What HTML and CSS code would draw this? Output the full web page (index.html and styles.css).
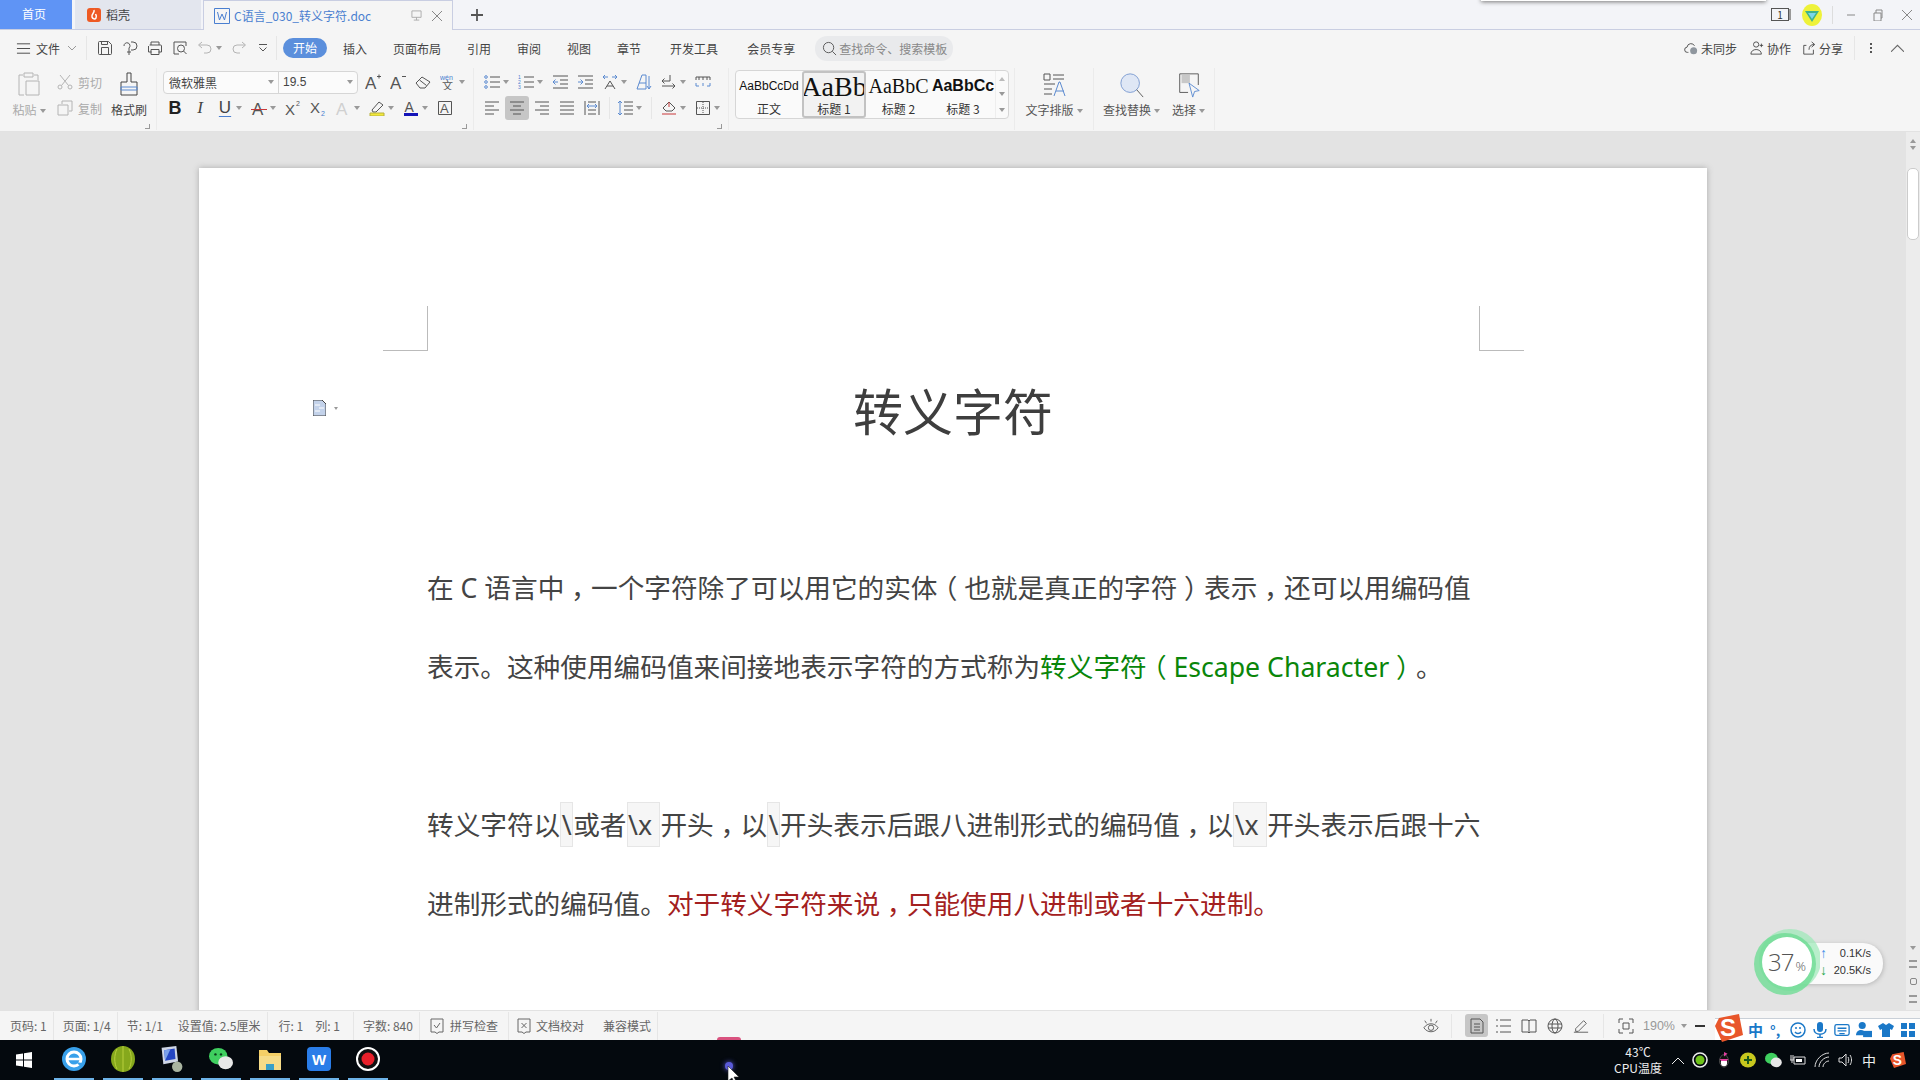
FILE: index.html
```html
<!DOCTYPE html>
<html>
<head>
<meta charset="UTF-8">
<title>C语言_030_转义字符.doc</title>
<link rel="stylesheet" href="styles.css">
</head>
<body>
<svg class="sprite" xmlns="http://www.w3.org/2000/svg">
	<defs>
		<symbol id="i-menu" viewBox="0 0 16 16"><path d="M1 3h14M1 8h14M1 13h14"/></symbol>
		<symbol id="i-save" viewBox="0 0 16 16"><path d="M2.500 1.500h9l3 3v9a1 1 0 0 1-1 1h-11a1 1 0 0 1-1-1v-11a1 1 0 0 1 1-1zM4.500 14.500v-7h7v7M4.500 1.500v3h6v-3"/></symbol>
		<symbol id="i-saveas" viewBox="0 0 16 16"><path d="M2 6a3 3 0 1 1 5 2v7M9 2h2a3.500 3.500 0 0 1 0 8H9M5 12h4"/></symbol>
		<symbol id="i-print" viewBox="0 0 16 16"><path d="M4 5V2h8v3M2.500 5h11a1 1 0 0 1 1 1v6h-3M4.500 12h-3V6M4 9.500h8v5H4z"/></symbol>
		<symbol id="i-preview" viewBox="0 0 16 16"><path d="M14 6V2H2v12h5"/><circle cx="9" cy="8.500" r="3.500"/><path d="M11.500 11l3 3"/></symbol>
		<symbol id="i-undo" viewBox="0 0 16 16"><path d="M5 2L1.500 5 5 8M2 5h8a4 4 0 0 1 0 8H7"/></symbol>
		<symbol id="i-redo" viewBox="0 0 16 16"><path d="M11 2l3.500 3L11 8M14 5H6a4 4 0 0 0 0 8h3"/></symbol>
		<symbol id="i-qdrop" viewBox="0 0 10 10"><path d="M1 1.500h8M1.500 4.500l3.500 3.500 3.500-3.500"/></symbol>
		<symbol id="i-paste" viewBox="0 0 22 24"><path d="M5 3H1v20h5M16 3h4v5M6 1h9v4H6zM8 9h13v14H8z"/></symbol>
		<symbol id="i-scissors" viewBox="0 0 16 16"><circle cx="3" cy="13" r="2"/><circle cx="13" cy="13" r="2"/><path d="M4.500 11.500L13 1M11.500 11.500L3 1"/></symbol>
		<symbol id="i-copy" viewBox="0 0 16 16"><path d="M5 4V1h10v10h-3M1 5h10v10H1z"/></symbol>
		<symbol id="i-brush" viewBox="0 0 18 24"><path d="M7 1h4v9h6v13H1V10h6z"/><path class="accent" d="M1 15h16v3H1z"/></symbol>
		<symbol id="i-aplus" viewBox="0 0 16 16"><text x="0" y="15" font-size="17" class="glyph">A</text><path d="M12 2.500h4M14 .5v4"/></symbol>
		<symbol id="i-aminus" viewBox="0 0 16 16"><text x="0" y="15" font-size="17" class="glyph">A</text><path d="M12 2.500h4"/></symbol>
		<symbol id="i-eraser" viewBox="0 0 16 16"><path d="M1 9l6-6 8 5-5 6H5z"/><path d="M4.500 6l7 5.500"/></symbol>
		<symbol id="i-wen" viewBox="0 0 16 16"><text x="0" y="6" font-size="7" class="tiny blue">wén</text><text x="2" y="16" font-size="11" class="glyph">文</text></symbol>
		<symbol id="i-strike" viewBox="0 0 16 16"><text x="1" y="15" font-size="17" class="glyph">A</text><path class="red-line" d="M0 9.500h16"/></symbol>
		<symbol id="i-sup" viewBox="0 0 16 16"><text x="0" y="15" font-size="15" class="glyph">X</text><text x="11" y="6" font-size="7" class="tiny">2</text></symbol>
		<symbol id="i-sub" viewBox="0 0 16 16"><text x="0" y="13" font-size="15" class="glyph">X</text><text x="11" y="16" font-size="7" class="tiny blue">2</text></symbol>
		<symbol id="i-agray" viewBox="0 0 16 16"><text x="1" y="15" font-size="17" class="glyph pale">A</text></symbol>
		<symbol id="i-marker" viewBox="0 0 16 16"><path d="M3 10l7-8 4 3-7 7H4z"/><path class="yellow" d="M1 13h14v3H1z"/></symbol>
		<symbol id="i-acolor" viewBox="0 0 16 16"><text x="1.500" y="12" font-size="14" class="glyph">A</text><path class="navy" d="M1 14.500h14"/></symbol>
		<symbol id="i-abox" viewBox="0 0 16 16"><path d="M1.500 1.500h13v13h-13z"/><text x="3" y="13" font-size="13" class="glyph">A</text></symbol>
		<symbol id="i-bullets" viewBox="0 0 16 16"><path d="M6 3h10M6 8h10M6 13h10"/><circle class="accent" cx="2" cy="3" r="1.300"/><circle class="accent" cx="2" cy="8" r="1.300"/><circle class="accent" cx="2" cy="13" r="1.300"/></symbol>
		<symbol id="i-numbers" viewBox="0 0 16 16"><path d="M6 3h10M6 8h10M6 13h10"/><text x="0" y="5" font-size="5" class="tiny blue">1</text><text x="0" y="10" font-size="5" class="tiny blue">2</text><text x="0" y="15" font-size="5" class="tiny blue">3</text></symbol>
		<symbol id="i-outdent" viewBox="0 0 16 16"><path d="M1 2h15M8 6h8M8 10h8M1 14h15"/><path class="accent" d="M6 8H1M3.500 5.500L1 8l2.500 2.500"/></symbol>
		<symbol id="i-indent" viewBox="0 0 16 16"><path d="M1 2h15M8 6h8M8 10h8M1 14h15"/><path class="accent" d="M1 8h5M3.500 5.500L6 8l-2.500 2.500"/></symbol>
		<symbol id="i-spread" viewBox="0 0 16 16"><path d="M3 15L8 7l5 8M5 12h6"/><path class="accent" d="M1 3h5M3 1L1 3l2 2M15 3h-5M13 1l2 2-2 2"/></symbol>
		<symbol id="i-sort" viewBox="0 0 16 16"><path class="accent" d="M1 15L6 1h4v14M3 9h7M1 15h9M13 2v13M11 12l2 3 2-3"/></symbol>
		<symbol id="i-return" viewBox="0 0 16 16"><path d="M9 1v6H1M3.500 4.500L1 7l2.500 2.500M1 12h13M11.500 9.500L14 12l-2.500 2.500"/></symbol>
		<symbol id="i-ruler" viewBox="0 0 16 16"><path d="M1 3h14M4 3v3M8 3v3M12 3v3M1 3v3M15 3v3"/><path class="accent" d="M1 9v3h3M15 9v3h-3M8 9v3"/></symbol>
		<symbol id="i-left" viewBox="0 0 16 16"><path d="M1 2h14M1 6h9M1 10h14M1 14h9"/></symbol>
		<symbol id="i-center" viewBox="0 0 16 16"><path d="M1 2h14M4 6h8M1 10h14M4 14h8"/></symbol>
		<symbol id="i-right" viewBox="0 0 16 16"><path d="M1 2h14M6 6h9M1 10h14M6 14h9"/></symbol>
		<symbol id="i-justify" viewBox="0 0 16 16"><path d="M1 2h14M1 6h14M1 10h14M1 14h14"/></symbol>
		<symbol id="i-distrib" viewBox="0 0 16 16"><path d="M1 1v14M15 1v14M4 2h8M4 14h8M4 10h8"/><path class="accent" d="M3 6h10M5 4L3 6l2 2M11 4l2 2-2 2"/></symbol>
		<symbol id="i-linespace" viewBox="0 0 16 16"><path d="M7 2h9M7 6h9M7 10h9M7 14h9"/><path class="accent" d="M3 1v14M1 3l2-2 2 2M1 13l2 2 2-2"/></symbol>
		<symbol id="i-shade" viewBox="0 0 16 16"><path d="M2 8l6-6 6 6-3 3H5z"/><path class="red-line" d="M1 14h14M8 2v5"/></symbol>
		<symbol id="i-border" viewBox="0 0 16 16"><path d="M1.500 1.500h13v13h-13z"/><path class="dotted" d="M8 2v12M2 8h12"/></symbol>
		<symbol id="i-layout" viewBox="0 0 26 26"><path d="M3 2h6v6H3zM12 3h11M12 7h11M3 12h11M3 17h8M3 22h8"/><path class="accent" d="M13 24l5-14h1l5 14M15 19h8"/></symbol>
		<symbol id="i-find" viewBox="0 0 28 28"><circle class="soft" cx="12" cy="12" r="10"/><path d="M19 19l7 8"/></symbol>
		<symbol id="i-select" viewBox="0 0 26 28"><path d="M12 22H3V2h20v12"/><path class="fillgray" d="M5 3h9v9H5z"/><path class="accent" d="M13 12l11 8-5 1-2 6z"/></symbol>
		<symbol id="i-cloud" viewBox="0 0 16 16"><path d="M5 13H4a3 3 0 0 1-.5-6A4.500 4.500 0 0 1 12 5.500"/><circle class="fillgray2" cx="11" cy="11" r="4"/></symbol>
		<symbol id="i-people" viewBox="0 0 16 16"><circle cx="7" cy="4" r="3"/><path d="M1 15c0-7 12-7 12 0zM13 3v4M11 5h4"/></symbol>
		<symbol id="i-share" viewBox="0 0 16 16"><path d="M5 5H2v10h11v-5M8 10c0-4 2-6 6-6M11 1l3.500 3L11 7"/></symbol>
		<symbol id="i-check" viewBox="0 0 16 16"><path d="M2 1h12v13h-4l-2 1.500L6 14H2zM5 7l2.500 3L11 5"/></symbol>
		<symbol id="i-proof" viewBox="0 0 16 16"><path d="M2 1h12v13h-4l-2 1.500L6 14H2zM5.500 5l5 5M10.500 5l-5 5"/></symbol>
		<symbol id="i-eye" viewBox="0 0 18 18"><path d="M1 11c4-6 12-6 16 0-4 6-12 6-16 0zM2 3l2 3M9 1v3M16 3l-2 3"/><circle cx="9" cy="11" r="3"/></symbol>
		<symbol id="i-page" viewBox="0 0 16 16"><path d="M2 1h9l3 3v11H2zM5 6h6M5 9h6M5 12h6"/></symbol>
		<symbol id="i-outline" viewBox="0 0 16 16"><path d="M5 2h11M5 8h11M5 14h11M1 2h2M1 8h2M1 14h2"/></symbol>
		<symbol id="i-book" viewBox="0 0 16 16"><path d="M1 2h6l1 1 1-1h6v12H9l-1 1-1-1H1zM8 3v12"/></symbol>
		<symbol id="i-globe" viewBox="0 0 16 16"><circle cx="8" cy="8" r="7"/><ellipse cx="8" cy="8" rx="3" ry="7"/><path d="M1 6h14M1 10h14"/></symbol>
		<symbol id="i-pen" viewBox="0 0 18 16"><path d="M3 11l9-9 3 3-9 9H3zM1 15h16"/></symbol>
		<symbol id="i-fit" viewBox="0 0 16 16"><path d="M1 5V1h4M11 1h4v4M15 11v4h-4M5 15H1v-4M5 5h6v6H5z"/></symbol>
		<symbol id="i-sogou" viewBox="0 0 28 28"><path class="sg-bg" d="M4 4l20-4 4 21-21 7-7-16z"/><text x="5" y="22" font-size="24" class="sg-s">S</text></symbol>
		<symbol id="i-face" viewBox="0 0 16 16"><circle cx="8" cy="8" r="7"/><path d="M5 10c1.500 2 4.500 2 6 0M6 5v2M10 5v2"/></symbol>
		<symbol id="i-mic" viewBox="0 0 16 16"><rect class="solid" x="5" y="0" width="6" height="10" rx="3"/><path d="M2 7c0 7 12 7 12 0M8 12v3M5 15.500h6"/></symbol>
		<symbol id="i-keys" viewBox="0 0 18 16"><rect x="1" y="2" width="16" height="12" rx="2"/><path d="M4 6h10M4 9h10M6 12h6"/></symbol>
		<symbol id="i-user" viewBox="0 0 18 18"><circle class="solid" cx="7" cy="4" r="4"/><path class="solid" d="M0 15c0-6 6-7 9-5v5z"/><rect class="solid" x="8" y="10" width="10" height="7"/></symbol>
		<symbol id="i-shirt" viewBox="0 0 16 16"><path class="solid" d="M5 1L0 4l2 4 2-1v8h8V7l2 1 2-4-5-3-3 2z"/></symbol>
		<symbol id="i-grid" viewBox="0 0 16 16"><path class="solid" d="M1 1h6v6H1zM9 1h6v6H9zM1 9h6v6H1zM9 9h6v6H9z"/></symbol>
		<symbol id="i-volume" viewBox="0 0 16 16"><path d="M1 6h3l4-4v12l-4-4H1zM10 5c1 2 1 4 0 6M12 3c2 3 2 7 0 10"/></symbol>
		<symbol id="i-wifi" viewBox="0 0 16 16"><path d="M1 15C1 8 8 1 15 1M5 15c0-5 5-10 10-10M9 15c0-3 3-6 6-6"/></symbol>
		<symbol id="i-battery" viewBox="0 0 16 16"><path d="M4 5h11v7H4zM1 3v5M3 3v5M0 8h4M2 8v3"/><path class="solid-w" d="M6 7h6v3H6z"/></symbol>
		<symbol id="i-wechat" viewBox="0 0 22 20"><ellipse class="wc-g" cx="9" cy="8" rx="8" ry="7"/><ellipse class="wc-w" cx="15" cy="13" rx="7" ry="6"/></symbol>
	</defs>
</svg>

<div class="popup-edge"></div>

<!-- 标签栏 -->
<header class="tabbar">
	<div class="tab-home">首页</div>
	<div class="tab-app">
		<svg class="logo-fire" viewBox="0 0 14 14"><rect width="14" height="14" rx="3"/><path d="M7 2c1 3-3 4-2 7 .5 2 3 2.500 4 1 1-2 0-3-.5-4"/></svg>
		稻壳
	</div>
	<div class="tab-doc">
		<svg class="logo-w" viewBox="0 0 16 16"><path d="M.5.5h15v15H.5zM3.500 4l2 8 2.500-6 2.500 6 2-8"/></svg>
		<span class="doc-name">C语言_030_转义字符.doc</span>
		<svg class="doc-monitor" viewBox="0 0 12 12"><path d="M1 1h10v7H1zM6 8v3M3 11h6"/></svg>
		<svg class="doc-close" viewBox="0 0 10 10"><path d="M0 0l10 10M10 0L0 10"/></svg>
	</div>
	<svg class="tab-add" viewBox="0 0 12 12"><path d="M6 0v12M0 6h12"/></svg>
	<div class="winbtns">
		<div class="book-num">1</div>
		<svg class="gem" viewBox="0 0 20 22"><ellipse cx="10" cy="11" rx="10" ry="11" fill="#eef23a"/><path d="M3 7h14l-7 11z" fill="#3fb38a"/><path d="M6 9h8l-4 6z" fill="#7ad6e8"/></svg>
		<span class="win-sep"></span>
		<svg class="win-ic" viewBox="0 0 12 12"><path d="M2 6h8"/></svg>
		<svg class="win-ic win-restore" viewBox="0 0 12 12"><path d="M2 4h7v8H2zM4 4V1h6v8H9"/></svg>
		<svg class="win-ic" viewBox="0 0 12 12"><path d="M1 1l10 10M11 1L1 11"/></svg>
	</div>
</header>

<!-- 菜单行 -->
<nav class="menubar">
	<svg class="ic menu-ic"><use href="#i-menu"/></svg>
	<span class="file-btn">文件</span>
	<svg class="chev" viewBox="0 0 8 5"><path d="M0 0l4 4 4-4"/></svg>
	<span class="vsep qat-sep"></span>
	<div class="qat">
		<svg class="ic"><use href="#i-save"/></svg>
		<svg class="ic"><use href="#i-saveas"/></svg>
		<svg class="ic"><use href="#i-print"/></svg>
		<svg class="ic"><use href="#i-preview"/></svg>
		<svg class="ic off"><use href="#i-undo"/></svg>
		<i class="drop"></i>
		<svg class="ic off"><use href="#i-redo"/></svg>
		<svg class="ic-s"><use href="#i-qdrop"/></svg>
	</div>
	<span class="vsep tabs-sep"></span>
	<div class="tabs">
		<span class="tab-on">开始</span>
		<span class="tab">插入</span>
		<span class="tab">页面布局</span>
		<span class="tab">引用</span>
		<span class="tab">审阅</span>
		<span class="tab">视图</span>
		<span class="tab">章节</span>
		<span class="tab tab-wide">开发工具</span>
		<span class="tab tab-wide">会员专享</span>
	</div>
	<div class="search">
		<svg class="search-ic" viewBox="0 0 16 16"><circle cx="7" cy="7" r="5.500"/><path d="M11 11l4 4"/></svg>
		查找命令、搜索模板
	</div>
	<div class="menu-right">
		<svg class="ic"><use href="#i-cloud"/></svg><span class="mr-txt mr-first">未同步</span>
		<svg class="ic"><use href="#i-people"/></svg><span class="mr-txt">协作</span>
		<svg class="ic"><use href="#i-share"/></svg><span class="mr-txt">分享</span>
		<span class="vsep mr-sep"></span>
		<span class="kebab"><i></i><i></i><i></i></span>
		<svg class="collapse" viewBox="0 0 12 7"><path d="M0 7l6-6 6 6"/></svg>
	</div>
</nav>

<!-- 功能区 -->
<section class="ribbon">
	<div class="group g-clip">
		<div class="big off-text paste-col">
			<svg class="big-paste off"><use href="#i-paste"/></svg>
			<span>粘贴<i class="drop"></i></span>
		</div>
		<div class="clip-col">
			<div class="clip-item"><svg class="ic off"><use href="#i-scissors"/></svg>剪切</div>
			<div class="clip-item"><svg class="ic off"><use href="#i-copy"/></svg>复制</div>
		</div>
		<div class="big brush-col">
			<svg class="big-brush"><use href="#i-brush"/></svg>
			<span>格式刷</span>
		</div>
		<i class="corner"></i>
	</div>

	<div class="group g-font">
		<div class="row">
			<div class="fontbox">
				<div class="fb-name">微软雅黑<i class="drop"></i></div>
				<div class="fb-size">19.5<i class="drop"></i></div>
			</div>
			<svg class="ic"><use href="#i-aplus"/></svg>
			<svg class="ic"><use href="#i-aminus"/></svg>
			<svg class="ic"><use href="#i-eraser"/></svg>
			<svg class="ic"><use href="#i-wen"/></svg><i class="drop"></i>
		</div>
		<div class="row row-format">
			<span class="txt-b">B</span>
			<span class="txt-i">I</span>
			<span class="txt-u">U</span><i class="drop"></i>
			<svg class="ic"><use href="#i-strike"/></svg><i class="drop"></i>
			<svg class="ic"><use href="#i-sup"/></svg>
			<svg class="ic"><use href="#i-sub"/></svg>
			<svg class="ic"><use href="#i-agray"/></svg><i class="drop"></i>
			<svg class="ic"><use href="#i-marker"/></svg><i class="drop"></i>
			<svg class="ic"><use href="#i-acolor"/></svg><i class="drop"></i>
			<svg class="ic"><use href="#i-abox"/></svg>
		</div>
		<i class="corner"></i>
	</div>

	<div class="group g-para">
		<div class="row">
			<svg class="ic"><use href="#i-bullets"/></svg><i class="drop"></i>
			<svg class="ic"><use href="#i-numbers"/></svg><i class="drop"></i>
			<svg class="ic"><use href="#i-outdent"/></svg>
			<svg class="ic"><use href="#i-indent"/></svg>
			<svg class="ic"><use href="#i-spread"/></svg><i class="drop"></i>
			<svg class="ic"><use href="#i-sort"/></svg>
			<svg class="ic"><use href="#i-return"/></svg><i class="drop"></i>
			<svg class="ic"><use href="#i-ruler"/></svg>
		</div>
		<div class="row">
			<svg class="ic"><use href="#i-left"/></svg>
			<span class="ic-on"><svg class="ic"><use href="#i-center"/></svg></span>
			<svg class="ic"><use href="#i-right"/></svg>
			<svg class="ic"><use href="#i-justify"/></svg>
			<svg class="ic"><use href="#i-distrib"/></svg>
			<span class="vsep row-sep"></span>
			<svg class="ic"><use href="#i-linespace"/></svg><i class="drop"></i>
			<span class="vsep row-sep2"></span>
			<svg class="ic"><use href="#i-shade"/></svg><i class="drop"></i>
			<svg class="ic"><use href="#i-border"/></svg><i class="drop"></i>
		</div>
		<i class="corner"></i>
	</div>

	<div class="gallery">
		<div class="style s-body"><b>AaBbCcDd</b><span>正文</span></div>
		<div class="style s-h1 style-on"><b>AaBb</b><span>标题 1</span></div>
		<div class="style s-h2"><b>AaBbC</b><span>标题 2</span></div>
		<div class="style s-h3"><b>AaBbCc</b><span>标题 3</span></div>
		<div class="gal-scroll">
			<i class="tri-up"></i>
			<i class="tri-down"></i>
			<i class="tri-more"></i>
		</div>
	</div>

	<div class="group g-layout">
		<div class="big">
			<svg class="big-ic"><use href="#i-layout"/></svg>
			<span>文字排版<i class="drop"></i></span>
		</div>
	</div>
	<div class="group g-find">
		<div class="big find-col">
			<svg class="big-ic"><use href="#i-find"/></svg>
			<span>查找替换<i class="drop"></i></span>
		</div>
		<div class="big">
			<svg class="big-ic"><use href="#i-select"/></svg>
			<span>选择<i class="drop"></i></span>
		</div>
	</div>
</section>

<!-- 文档区 -->
<main class="workspace">
	<article class="page">
		<i class="crop crop-l"></i>
		<i class="crop crop-r"></i>
		<div class="para-mark">
			<svg viewBox="0 0 13 16"><path d="M0 0h9l4 4v12H0z" fill="#c3d2ea"/><path d="M2 5h5M6 8h5M2 11h5" stroke="#fff"/></svg>
			<i class="drop"></i>
		</div>
		<h1 class="doc-title">转义字符</h1>
		<p class="doc-p">在 C 语言中<span class="pun">，</span>一个字符除了可以用它的实体<span class="pun">（</span>也就是真正的字符<span class="pun">）</span>表示<span class="pun">，</span>还可以用编码值<br>表示。这种使用编码值来间接地表示字符的方式称为<span class="green">转义字符<span class="pun">（</span>Escape Character<span class="pun">）</span></span>。</p>
		<p class="doc-p">转义字符以<code>\</code>或者<code>\x </code>开头<span class="pun">，</span>以<code>\</code>开头表示后跟八进制形式的编码值<span class="pun">，</span>以<code>\x </code>开头表示后跟十六<br>进制形式的编码值。<span class="red">对于转义字符来说<span class="pun">，</span>只能使用八进制或者十六进制。</span></p>
	</article>
	<aside class="vscroll">
		<i class="sb-up"></i>
		<i class="sb-up sb-up2"></i>
		<div class="sb-thumb"></div>
		<div class="sb-foot">
			<i class="tri-down"></i>
			<i class="sb-dbl-up"></i>
			<i class="sb-dot"></i>
			<i class="sb-dbl-down"></i>
		</div>
	</aside>
	<div class="netwidget">
		<div class="net-pill">
			<div class="net-line"><em class="up">↑</em>0.1K/s</div>
			<div class="net-line"><em class="down">↓</em>20.5K/s</div>
		</div>
		<svg class="net-blob" viewBox="0 0 66 68">
			<circle cx="36" cy="32" r="31" fill="#9be8b6" opacity=".7"/>
			<circle cx="31" cy="36" r="31" fill="#6fdc95" opacity=".8"/>
			<circle cx="33" cy="34" r="25" fill="#fff"/>
		</svg>
		<div class="net-num">37<small>%</small></div>
	</div>
</main>

<!-- 状态栏 -->
<footer class="statusbar">
	<span class="st st-first">页码: 1</span>
	<span class="st">页面: 1/4</span>
	<span class="st st-pair"><span>节: 1/1</span><span>设置值: 2.5厘米</span></span>
	<span class="st st-pair2"><span>行: 1</span><span>列: 1</span></span>
	<span class="st">字数: 840</span>
	<span class="st st-ic"><svg class="ic"><use href="#i-check"/></svg>拼写检查</span>
	<span class="st st-ic st-ic2"><svg class="ic"><use href="#i-proof"/></svg>文档校对</span>
	<span class="st st-last">兼容模式</span>
	<div class="st-right">
		<svg class="ic st-eye"><use href="#i-eye"/></svg>
		<span class="vsep"></span>
		<span class="view-on"><svg class="ic"><use href="#i-page"/></svg></span>
		<svg class="ic"><use href="#i-outline"/></svg>
		<svg class="ic"><use href="#i-book"/></svg>
		<svg class="ic"><use href="#i-globe"/></svg>
		<svg class="ic"><use href="#i-pen"/></svg>
		<span class="vsep zoom-sep"></span>
		<svg class="ic"><use href="#i-fit"/></svg>
		<span class="zoom">190%<i class="drop"></i></span>
		<i class="zoom-minus"></i>
	</div>
</footer>

<div class="imebar">
	<svg class="ime-s"><use href="#i-sogou"/></svg>
	<span class="ime-cn">中</span>
	<span class="ime-punc">°,</span>
	<svg class="ime-ic"><use href="#i-face"/></svg>
	<svg class="ime-ic"><use href="#i-mic"/></svg>
	<svg class="ime-ic"><use href="#i-keys"/></svg>
	<svg class="ime-ic"><use href="#i-user"/></svg>
	<svg class="ime-ic"><use href="#i-shirt"/></svg>
	<svg class="ime-ic"><use href="#i-grid"/></svg>
</div>

<!-- 任务栏 -->
<footer class="taskbar">
	<svg class="start" viewBox="0 0 16 16"><path d="M0 2.500l7-1v6H0zM8 1.300L16 0v7.500H8zM0 8.500h7v6l-7-1zM8 8.500h8V16l-8-1.300z" fill="#fff"/></svg>
	<div class="task-apps">
		<div class="task-app">
			<svg viewBox="0 0 24 24"><circle cx="12" cy="12" r="12" fill="#38a0ea"/><circle cx="12" cy="12" r="7" fill="none" stroke="#fff" stroke-width="3"/><path d="M5 12h14" stroke="#fff" stroke-width="2.500"/><path d="M14 15l6 1-2 3z" fill="#38a0ea"/></svg>
		</div>
		<div class="task-app">
			<svg viewBox="0 0 24 26"><ellipse cx="12" cy="13" rx="12" ry="13" fill="#86a81c"/><path d="M6 3c-3 6-3 14 0 20M12 0v26M18 3c3 6 3 14 0 20" stroke="#b8cf3c" fill="none"/></svg>
		</div>
		<div class="task-app">
			<svg viewBox="0 0 26 30"><path d="M1 2l17-2 2 18-17 3z" fill="#cfd6e6"/><path d="M4 5l12-2 1 12-12 2z" fill="#2446c4"/><path d="M4 5l7-1-6 13z" fill="#7aa0ea"/><circle cx="19" cy="24" r="6" fill="#a9b4a0"/></svg>
		</div>
		<div class="task-app">
			<svg viewBox="0 0 26 26"><ellipse cx="10" cy="10" rx="10" ry="9" fill="#3fcf5f"/><ellipse cx="18" cy="17" rx="8" ry="7" fill="#e8e8e8"/><circle cx="7" cy="8" r="1.300" fill="#0b3a1a"/><circle cx="13" cy="8" r="1.300" fill="#0b3a1a"/></svg>
		</div>
		<div class="task-app">
			<svg viewBox="0 0 24 24"><path d="M1 3h8l2 3h12v17H1z" fill="#f5cf66"/><path d="M1 9h22v14H1z" fill="#f7dc88"/><path d="M8 23v-6h8v6" fill="#3aa0c8"/></svg>
		</div>
		<div class="task-app">
			<svg viewBox="0 0 24 24"><rect width="24" height="24" rx="4" fill="#2a7de8"/><text x="12" y="18" text-anchor="middle" font-size="15" font-weight="700" fill="#fff" font-family="Liberation Sans">W</text></svg>
		</div>
		<div class="task-app">
			<svg viewBox="0 0 24 24"><circle cx="12" cy="12" r="11" fill="#111" stroke="#fff" stroke-width="2"/><circle cx="12" cy="12" r="6.500" fill="#e8202a"/></svg>
		</div>
	</div>
	<div class="tray">
		<div class="temp"><span>43℃</span><span>CPU温度</span></div>
		<svg class="tray-chev" viewBox="0 0 12 7"><path d="M0 7l6-6 6 6"/></svg>
		<svg class="tray-ic" viewBox="0 0 16 16"><circle cx="8" cy="8" r="7" fill="none" stroke="#eee" stroke-width="1.600"/><circle cx="8" cy="8" r="4.500" fill="#6fc31a"/></svg>
		<svg class="tray-ic" viewBox="0 0 16 18"><ellipse cx="8" cy="10" rx="5" ry="7" fill="#111" stroke="#555"/><ellipse cx="8" cy="12" rx="3.500" ry="4" fill="#fff"/><path d="M3 8h10l-2 2H5zM8 0l4 2-4 3z" fill="#e040a0"/></svg>
		<svg class="tray-ic" viewBox="0 0 16 16"><ellipse cx="8" cy="8" rx="8" ry="7.500" fill="#c8c81e"/><path d="M8 4v8M4 8h8" stroke="#1a5a1a" stroke-width="2"/></svg>
		<svg class="tray-ic tray-wc"><use href="#i-wechat"/></svg>
		<svg class="tray-line"><use href="#i-battery"/></svg>
		<svg class="tray-line"><use href="#i-wifi"/></svg>
		<svg class="tray-line"><use href="#i-volume"/></svg>
		<span class="tray-cn">中</span>
		<svg class="tray-s"><use href="#i-sogou"/></svg>
	</div>
</footer>

<div class="rec-dot"></div>
<div class="rec-glow"></div>
<svg class="cursor" viewBox="0 0 12 18"><path d="M1 0v15l4-3 3 6 2-1-3-6h5z" fill="#fff" stroke="#222" stroke-width=".6"/></svg>
</body>
</html>
```

FILE: styles.css
```css
*{
	margin:0;padding:0;
	box-sizing:border-box;
}
html,body{
	width:1920px;
	height:1080px;
	overflow:hidden;
}
body{
	position:relative;
	display:flex;
	flex-direction:column;
	font-family:"Noto Sans CJK SC","Liberation Sans",sans-serif;
	font-size:12px;
	color:#555;
	background:#f5f5f5;
}
i,em{
	font-style:normal;
}
.sprite{
	position:absolute;
	width:0;
	height:0;
}
svg{
	flex:none;
	fill:none;
	stroke:currentColor;
	stroke-width:1;
}
.sprite text,.glyph,.tiny{
	stroke:none;
	fill:#555;
	font-family:"Liberation Sans",sans-serif;
}
.sprite .glyph{font-family:"Liberation Sans","Noto Sans CJK SC",sans-serif;font-weight:400;}
.sprite .pale{fill:#d0d0d0;}
.sprite .blue{fill:#4a7fd0;}
.accent{stroke:#5b8ad0;}
.red-line{stroke:#c8383a;}
.navy{stroke:#1414b8;stroke-width:3;}
.yellow{fill:#f2e93a;stroke:#b8b040;}
.soft{fill:#dfe7f5;stroke:#7b9bd0;}
.fillgray{fill:#c8c8c8;stroke:none;}
.fillgray2{fill:#8f969e;stroke:none;}
.dotted{stroke-dasharray:1 1;}
.solid{fill:currentColor;stroke:none;}
.solid-w{fill:#fff;stroke:none;}
.ic{
	width:16px;
	height:16px;
}
.off{
	color:#b4b4b4;
}
/*小三角*/
.drop{
	flex:none;
	display:inline-block;
	width:0;
	height:0;
	margin-left:-6px;
	border:3px solid transparent;
	border-top:4px solid #999;
	border-bottom:0;
}
.vsep{
	flex:none;
	width:1px;
	height:24px;
	background:#e6e6e6;
}

/*顶部浮窗边缘*/
.popup-edge{
	position:absolute;
	left:1481px;
	top:-4px;
	width:285px;
	height:5px;
	background:#fff;
	box-shadow:0 1px 4px #777;
}

/*标签栏*/
.tabbar{
	flex:none;
	height:30px;
	display:flex;
	background:#f3f4f8;
	border-bottom:1px solid #c9cee2;
}
.tab-home{
	width:72px;
	height:29px;
	padding-right:4px;
	line-height:28px;
	text-align:center;
	color:#fff;
	background:#5f94f5;
}
.tab-app{
	width:126px;
	height:29px;
	margin-left:3px;
	padding-left:12px;
	display:flex;
	align-items:center;
	gap:5px;
	background:#e3e6ee;
	color:#444;
}
.logo-fire{
	width:14px;
	height:14px;
	fill:#ee5a24;
	stroke:none;
}
.logo-fire path{
	fill:none;
	stroke:#fff;
	stroke-width:1.500;
}
.tab-doc{
	width:250px;
	height:30px;
	margin-left:2px;
	padding-left:10px;
	display:flex;
	align-items:center;
	background:#f5f5f5;
	border:1px solid #c9cee2;
	border-bottom:0;
	color:#4a7fd0;
}
.logo-w{
	width:16px;
	height:16px;
	color:#4a7fd0;
}
.doc-name{
	width:181px;
	padding-left:4px;
}
.doc-monitor{
	width:11px;
	height:11px;
	color:#aaa;
}
.doc-close{
	width:10px;
	height:10px;
	margin-left:10px;
	color:#888;
}
.tab-add{
	width:12px;
	height:12px;
	margin:9px 0 0 18px;
	color:#555;
	stroke-width:1.800;
}
.winbtns{
	margin-left:auto;
	display:flex;
	align-items:center;
	padding-right:7px;
}
.book-num{
	width:18px;
	height:13px;
	line-height:12px;
	text-align:center;
	font-size:10px;
	color:#333;
	border:1px solid #555;
	box-shadow:3px 0 0 -1px #999;
}
.gem{
	width:20px;
	height:22px;
	margin-left:13px;
	stroke:none;
}
.win-sep{
	width:1px;
	height:18px;
	margin:0 12px 0 10px;
	background:#ddd;
}
.win-ic{
	width:12px;
	height:12px;
	margin-right:15px;
	color:#888;
}
.win-restore{
	margin-right:17px;
}
.win-ic:last-child{
	margin-right:0;
}

/*菜单行*/
.menubar{
	flex:none;
	height:36px;
	padding-left:16px;
	display:flex;
	align-items:center;
	color:#444;
}
.menu-ic{
	width:15px;
	height:15px;
}
.file-btn{
	margin-left:5px;
}
.chev{
	width:8px;
	height:5px;
	margin-left:8px;
	color:#999;
}
.qat-sep{
	margin-left:10px;
}
.qat{
	margin-left:10px;
	display:flex;
	align-items:center;
	gap:9px;
	color:#555;
}
.ic-s{
	width:10px;
	height:10px;
	margin-left:2px;
}
.tabs-sep{
	margin-left:8px;
}
.tabs{
	margin-left:6px;
	display:flex;
	align-items:center;
}
.tab-on{
	width:44px;
	height:20px;
	line-height:19px;
	text-align:center;
	color:#fff;
	background:#5b8fdc;
	border-radius:10px;
	margin-right:3px;
}
.tab{
	padding:0 13px;
}
.tab-wide{
	margin-left:3px;
}
.search{
	width:138px;
	height:25px;
	margin-left:7px;
	padding-left:7px;
	display:flex;
	align-items:center;
	gap:2px;
	color:#888;
	background:#e9eaec;
	border-radius:12px;
}
.search-ic{
	width:15px;
	height:15px;
	color:#555;
}
.menu-right{
	margin-left:auto;
	padding-right:16px;
	display:flex;
	align-items:center;
}
.menu-right .ic{
	width:14px;
	height:14px;
	margin-right:3px;
}
.mr-txt{
	margin-right:11px;
}
.mr-first{
	margin-right:13px;
}
.mr-sep{
	margin-right:15px;
}
.kebab{
	display:flex;
	flex-direction:column;
	gap:2px;
	margin-right:19px;
}
.kebab i{
	width:2px;
	height:2px;
	background:#555;
}
.collapse{
	width:13px;
	height:8px;
	color:#666;
}

/*功能区*/
.ribbon{
	flex:none;
	height:66px;
	display:flex;
	border-bottom:1px solid #e2e2e2;
	color:#555;
}
.group{
	position:relative;
	height:62px;
	margin-top:2px;
	border-right:1px solid #ebebeb;
}
.corner{
	position:absolute;
	right:6px;
	bottom:1px;
	width:5px;
	height:5px;
	border-right:1px solid #999;
	border-bottom:1px solid #999;
}
.row{
	height:24px;
	display:flex;
	align-items:center;
	gap:9px;
}
.row + .row{
	margin-top:2px;
}
.g-clip{
	width:157px;
	display:flex;
}
.big{
	display:flex;
	flex-direction:column;
	align-items:center;
	justify-content:space-between;
	height:50px;
	padding-top:4px;
	white-space:nowrap;
}
.big .drop{
	margin:0 0 2px 3px;
}
.off-text{
	color:#aaa;
}
.paste-col{
	width:42px;
	margin-left:8px;
}
.big-paste{
	width:22px;
	height:24px;
}
.clip-col{
	width:54px;
	margin:4px 0 0 7px;
	display:flex;
	flex-direction:column;
	gap:6px;
}
.clip-item{
	display:flex;
	align-items:center;
	gap:5px;
	height:20px;
	color:#aaa;
	white-space:nowrap;
}
.brush-col{
	width:36px;
	color:#444;
}
.big-brush{
	width:18px;
	height:24px;
}
.g-font{
	width:317px;
	padding-left:6px;
	padding-top:2px;
}
.fontbox{
	width:195px;
	height:23px;
	margin-right:-2px;
	display:flex;
	background:#fbfbfb;
	border:1px solid #d6d6d6;
	border-radius:4px;
	color:#444;
}
.fb-name{
	width:115px;
	padding-left:5px;
	display:flex;
	align-items:center;
	justify-content:space-between;
	border-right:1px solid #d6d6d6;
}
.fb-size{
	flex:1;
	padding-left:4px;
	display:flex;
	align-items:center;
	justify-content:space-between;
	font-family:"Liberation Sans",sans-serif;
	font-size:12px;
}
.fontbox .drop{
	margin:0 4px 0 0;
}
.row-format{
	padding-left:4px;
}
.row-format span{
	width:16px;
	text-align:center;
	font-family:"Liberation Serif",serif;
	font-size:17px;
	line-height:18px;
	color:#444;
}
.row-format .txt-b{
	font-family:"Liberation Sans",sans-serif;
	font-weight:700;
	font-size:18px;
	color:#222;
}
.row-format .txt-i{
	font-style:italic;
}
.row-format .txt-u{
	font-family:"Liberation Sans",sans-serif;
	text-decoration:underline;
	text-decoration-color:#4a7fd0;
	text-underline-offset:3px;
}
.g-para{
	width:255px;
	padding-left:10px;
	padding-top:2px;
}
.ic-on{
	display:flex;
	align-items:center;
	justify-content:center;
	width:24px;
	height:24px;
	margin:0 -4px;
	background:#c6c6c6;
	border-radius:3px;
}
.row-sep{
	height:22px;
	margin-right:-2px;
}
.row-sep2{
	height:22px;
}
.gallery{
	width:274px;
	height:49px;
	margin:4px 5px 0 6px;
	display:flex;
	background:#fafafa;
	border:1px solid #d6d6d6;
	border-radius:4px;
}
.style{
	width:53px;
	height:47px;
	overflow:hidden;
	display:flex;
	flex-direction:column;
	align-items:center;
	color:#333;
	white-space:nowrap;
}
.style b{
	height:30px;
	line-height:30px;
	font-weight:400;
	color:#111;
}
.style span{
	font-size:12px;
	line-height:16px;
}
.s-body b{
	font-size:12px;
	font-family:"Liberation Sans",sans-serif;
}
.s-h1{
	width:64px;
	border:2px solid #c2c2c2;
	border-radius:3px;
	background:#f2f2f2;
}
.s-h1 b{
	height:28px;
	line-height:28px;
	font-family:"Liberation Serif",serif;
	font-size:28px;
}
.s-h2 b{
	font-family:"Liberation Serif",serif;
	font-size:20px;
}
.s-h3 b{
	font-family:"Liberation Sans",sans-serif;
	font-size:16px;
	font-weight:700;
}
.s-body{
	width:66px;
}
.s-h2{
	width:65px;
}
.s-h3{
	width:64px;
}
.gal-scroll{
	flex:1;
	display:flex;
	flex-direction:column;
	align-items:center;
	justify-content:space-around;
	border-left:1px solid #eee;
}
.tri-up,.tri-down,.tri-more{
	display:block;
	width:0;
	height:0;
	border:3px solid transparent;
}
.tri-up{
	border-top:0;
	border-bottom:4px solid #bbb;
}
.tri-down,.tri-more{
	border-bottom:0;
	border-top:4px solid #999;
}
.g-layout{
	width:80px;
	display:flex;
	justify-content:center;
	border-left:1px solid #ebebeb;
}
.g-find{
	width:121px;
	display:flex;
	gap:12px;
	padding-left:9px;
}
.big-ic{
	width:26px;
	height:26px;
}

/*文档区*/
.workspace{
	position:relative;
	flex:1;
	min-height:0;
	overflow:hidden;
	display:flex;
	padding:36px 0 0 199px;
	background:#e3e3e3;
}
.page{
	position:relative;
	width:1508px;
	height:1400px;
	flex:none;
	padding:194px 228px 0;
	background:#fff;
	box-shadow:0 0 6px #aaa;
	color:#444;
	font-family:"Noto Sans","Noto Sans CJK SC",sans-serif;
}
.crop{
	position:absolute;
	top:138px;
	width:45px;
	height:45px;
	border-bottom:1px solid #bbb;
}
.crop-l{
	left:184px;
	border-right:1px solid #bbb;
}
.crop-r{
	right:183px;
	border-left:1px solid #bbb;
}
.para-mark{
	position:absolute;
	left:114px;
	top:232px;
	display:flex;
	align-items:center;
	gap:8px;
}
.para-mark svg{
	width:13px;
	height:16px;
	stroke-width:1;
}
.para-mark .drop{
	margin:0;
	border-width:2px;
	border-top-width:3px;
}
.doc-title{
	height:100px;
	line-height:100px;
	text-align:center;
	font-size:50px;
	font-weight:400;
	color:#3e3e3e;
}
.doc-p{
	font-size:26.670px;
	line-height:79px;
	white-space:nowrap;
	margin-bottom:79px;
}
.doc-title + .doc-p{
	margin-top:86px;
}
/*标点居中*/
.pun{
	display:inline-block;
	width:1em;
	text-align:center;
	font-feature-settings:"halt";
	line-height:1;
}
.green{
	color:#0a860a;
}
.red{
	color:#a32020;
}
code{
	font-family:inherit;
	font-size:inherit;
	padding:3px .5px;
	background:#f6f6f6;
	border:1px solid #e6e6e6;
	white-space:pre;
}
.vscroll{
	position:absolute;
	top:0;
	right:0;
	bottom:0;
	width:14px;
	display:flex;
	flex-direction:column;
	align-items:center;
	background:#ececec;
}
.sb-up{
	display:block;
	width:0;
	height:0;
	margin-top:7px;
	border:3px solid transparent;
	border-top:0;
	border-bottom:4px solid #999;
}
.sb-up2{
	margin-top:3px;
	border:3px solid transparent;
	border-bottom:0;
	border-top:4px solid #999;
}
.sb-thumb{
	width:12px;
	height:72px;
	margin-top:18px;
	background:#fff;
	border:1px solid #ccc;
	border-radius:5px;
}
.sb-foot{
	margin-top:auto;
	margin-bottom:7px;
	display:flex;
	flex-direction:column;
	align-items:center;
	gap:10px;
}
.sb-dbl-up,.sb-dbl-down{
	width:8px;
	height:8px;
	border-top:2px solid #999;
	border-bottom:2px solid #999;
}
.sb-dot{
	width:7px;
	height:7px;
	border:1px solid #888;
	border-radius:2px;
}
.netwidget{
	position:absolute;
	left:1754px;
	top:796px;
	width:132px;
	height:68px;
}
.net-blob{
	position:absolute;
	left:0;
	top:0;
	width:66px;
	height:68px;
	stroke:none;
}
.net-pill{
	position:absolute;
	left:40px;
	top:15px;
	width:89px;
	height:41px;
	padding:2px 12px 0 26px;
	background:#fafafa;
	border-radius:0 20px 20px 0;
	box-shadow:1px 1px 4px #bbb;
	font-family:"Liberation Sans",sans-serif;
	font-size:11px;
	color:#333;
}
.net-line{
	display:flex;
	justify-content:space-between;
	line-height:17px;
}
.up,.down{
	font-size:14px;
	font-weight:700;
}
.up{color:#3b8ee8;}
.down{color:#1fa84a;}
.net-num{
	position:absolute;
	left:14px;
	top:17px;
	width:40px;
	font-family:"Open Sans",sans-serif;
	font-weight:300;
	font-size:24px;
	line-height:34px;
	letter-spacing:-1px;
	color:#555;
	white-space:nowrap;
}
.net-num small{
	font-size:13px;
	margin-left:2px;
}

/*状态栏*/
.statusbar{
	flex:none;
	height:30px;
	display:flex;
	align-items:center;
	background:#f5f5f5;
	border-top:1px solid #e2e2e2;
	color:#666;
	white-space:nowrap;
}
.st{
	height:28px;
	padding:0 6px 0 9px;
	display:flex;
	align-items:center;
	border-right:1px solid #e6e6e6;
}
.st-first{
	padding-left:10px;
}
.st-pair span + span{
	margin-left:15px;
}
.st-pair2{
	padding:0 13px 0 11px;
}
.st-pair2 span + span{
	margin-left:12px;
}
.st-ic{
	padding:0 10px 0 9px;
	gap:5px;
}
.st-ic2{
	padding:0 0 0 7px;
	border-right:0;
	gap:4px;
}
.st-last{
	padding:0 6px 0 19px;
}
.st-right{
	margin-left:auto;
	padding-right:215px;
	display:flex;
	align-items:center;
	gap:10px;
	color:#555;
}
.st-eye{
	margin-right:2px;
}
.view-on{
	width:23px;
	height:23px;
	margin:0 -3px 0 3px;
	display:flex;
	align-items:center;
	justify-content:center;
	background:#c6c6c6;
	border-radius:3px;
}
.zoom-sep{
	margin:0 4px;
}
.zoom{
	color:#999;
	font-family:"Liberation Sans",sans-serif;
	font-size:12.500px;
	display:flex;
	align-items:center;
	gap:6px;
	margin-left:-1px;
}
.zoom .drop{
	margin:0;
}
.zoom-minus{
	width:10px;
	height:2px;
	margin-left:-2px;
	background:#333;
}

/*输入法条*/
.imebar{
	position:absolute;
	left:1715px;
	top:1018px;
	width:205px;
	height:22px;
	display:flex;
	align-items:center;
	background:#fff;
	border-top:1px solid #c9d0d8;
	color:#1a78c8;
}
.ime-s{
	width:28px;
	height:28px;
	margin-top:-4px;
	stroke:none;
}
.sg-bg{
	fill:#e8562a;
	stroke:none;
}
.sprite .sg-s{
	fill:#fff;
	font-weight:700;
	font-family:"Liberation Sans",sans-serif;
}
.ime-cn{
	margin-left:5px;
	font-size:15px;
	font-weight:700;
}
.ime-punc{
	margin-left:7px;
	width:14px;
	font-size:14px;
	font-weight:700;
}
.ime-ic{
	width:16px;
	height:16px;
	margin-left:6px;
	stroke-width:1.500;
}

/*任务栏*/
.taskbar{
	flex:none;
	height:40px;
	display:flex;
	align-items:center;
	background:#04090e;
	color:#eee;
}
.start{
	width:16px;
	height:16px;
	margin-left:16px;
	stroke:none;
}
.task-apps{
	margin-left:22px;
	display:flex;
	gap:9px;
	align-self:stretch;
}
.task-app{
	width:40px;
	display:flex;
	align-items:center;
	justify-content:center;
	border-bottom:2px solid #6db3e8;
}
.task-app svg{
	width:24px;
	height:26px;
	stroke:none;
}
.tray{
	margin-left:auto;
	padding-right:14px;
	display:flex;
	align-items:center;
	gap:8px;
}
.temp{
	width:50px;
	margin-right:1px;
	display:flex;
	flex-direction:column;
	align-items:center;
	font-size:12px;
	line-height:16px;
	white-space:nowrap;
}
.tray-chev{
	width:12px;
	height:7px;
}
.tray-ic{
	width:16px;
	height:16px;
	stroke:none;
}
.tray-wc{
	width:18px;
}
.wc-g{fill:#3fcf5f;stroke:none;}
.wc-w{fill:#e8e8e8;stroke:none;}
.tray-line{
	width:16px;
	height:16px;
	color:#ddd;
}
.tray-cn{
	margin:0 6px 0 0;
	font-size:14px;
}
.tray-s{
	width:16px;
	height:16px;
	stroke:none;
}

/*录屏光标*/
.rec-dot{
	position:absolute;
	left:717px;
	top:1037px;
	width:24px;
	height:3px;
	background:#d9527f;
	border-radius:12px 12px 0 0;
}
.rec-glow{
	position:absolute;
	left:725px;
	top:1062px;
	width:8px;
	height:8px;
	background:#5a5ad8;
	border-radius:50%;
	box-shadow:0 0 5px #5a5ad8;
}
.cursor{
	position:absolute;
	left:727px;
	top:1066px;
	width:12px;
	height:18px;
	stroke:none;
}
```
